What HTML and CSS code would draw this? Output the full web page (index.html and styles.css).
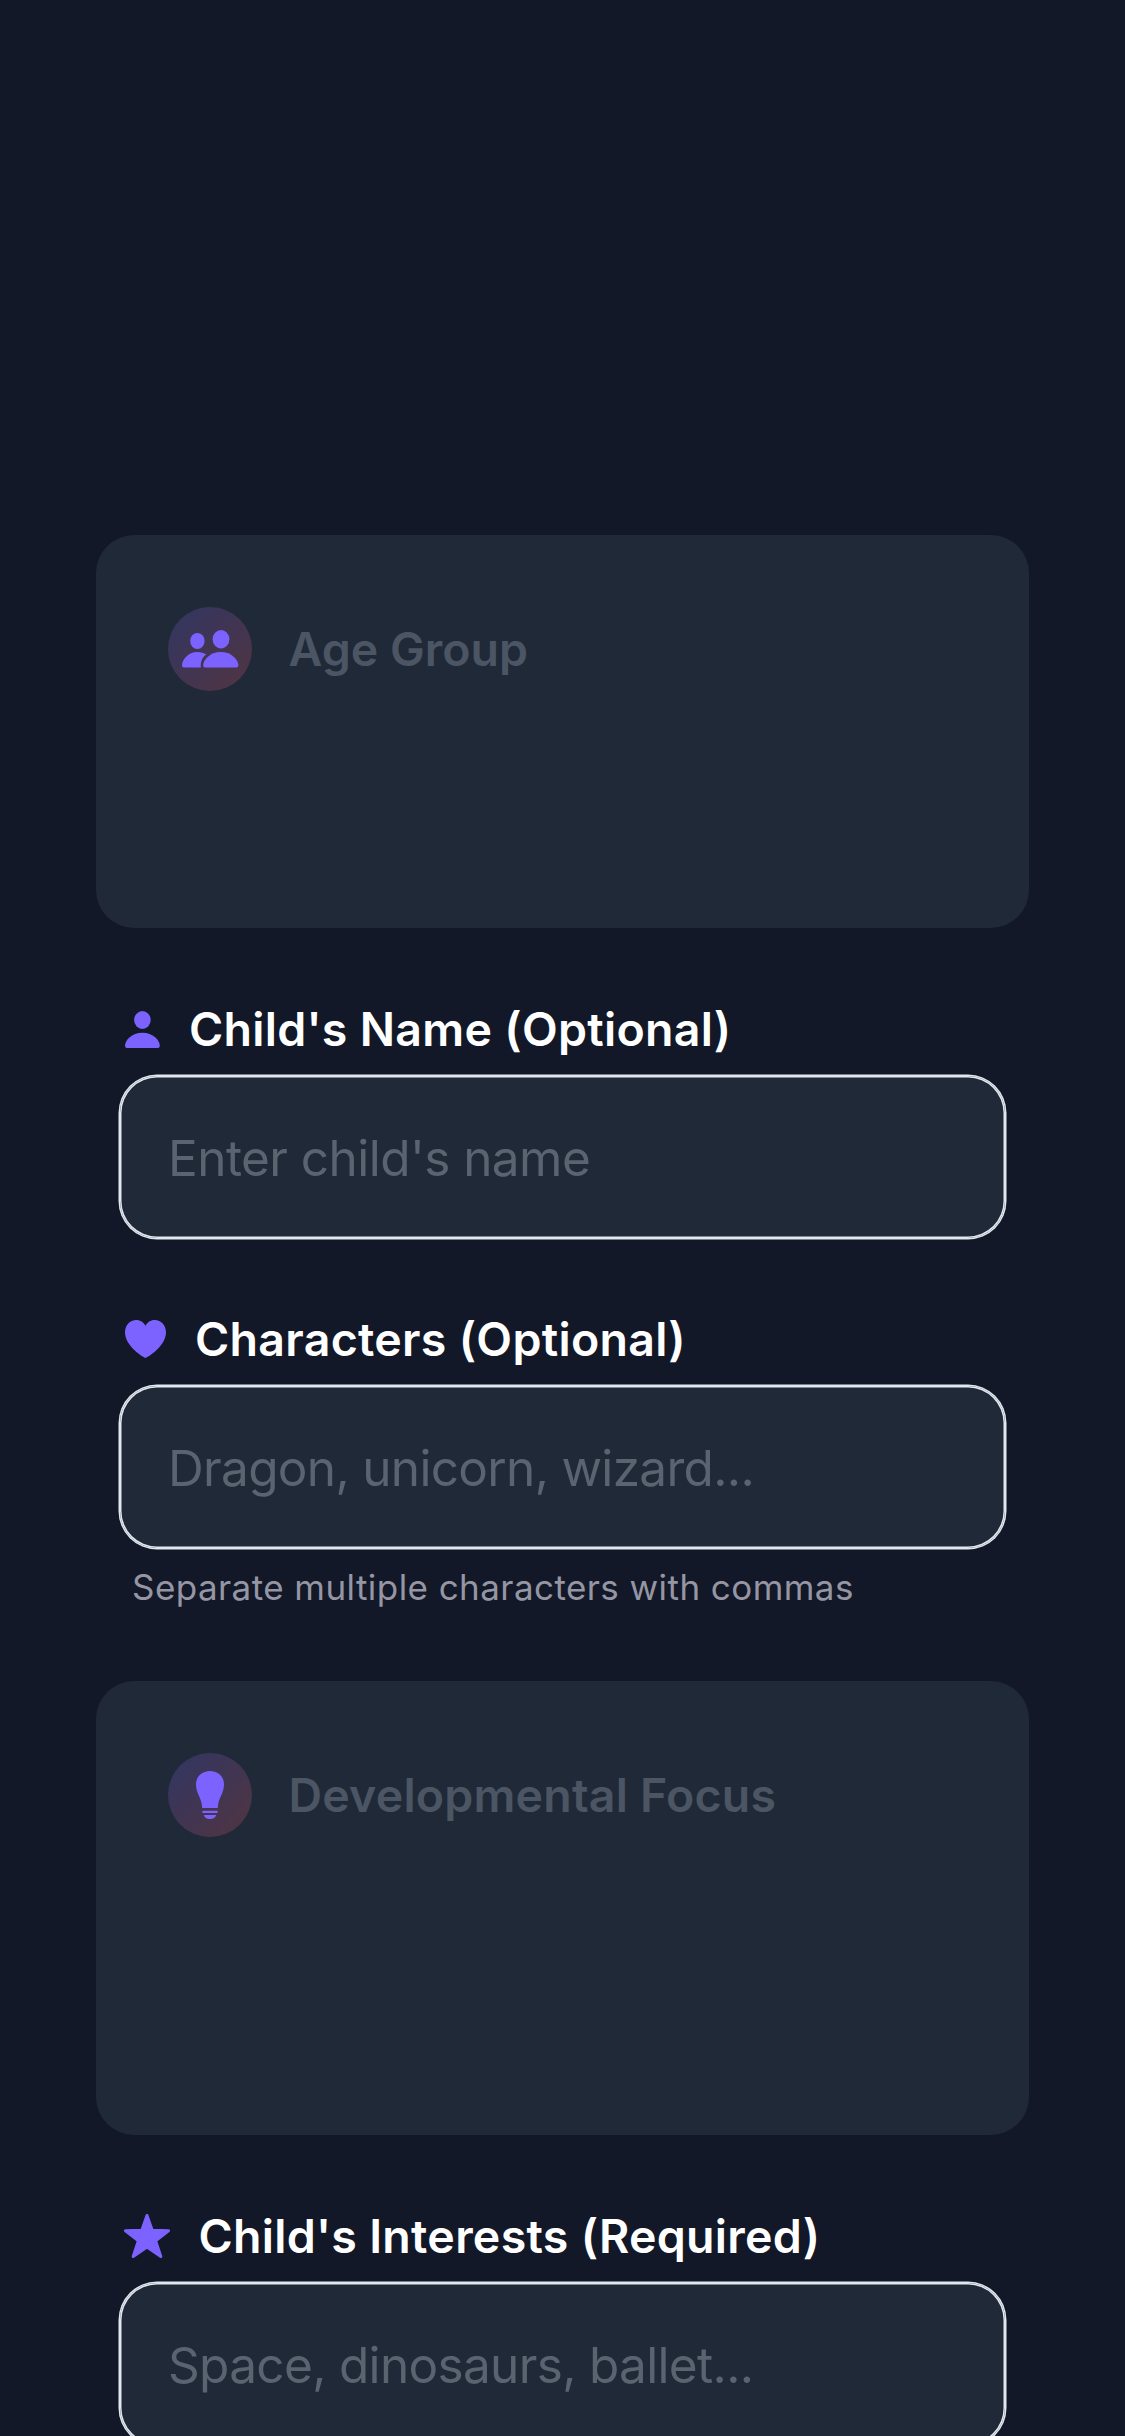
FILE: index.html
```html
<!DOCTYPE html>
<html lang="en">
<head>
<meta charset="utf-8">
<title>Story details</title>
<link rel="stylesheet" href="styles.css">
</head>
<body>
<main class="form">
  <section class="card card-age">
    <span class="badge">
      <svg class="icon-group" viewBox="0 0 57 38"><ellipse cx="15.4" cy="11" rx="7.2" ry="8"/><ellipse cx="39" cy="9.3" rx="8.4" ry="9.2"/><path d="M2.500 37.500C1 37.500 0 36.800 0 35.200C0 30 6 22 15.400 22C19 22 22 23 24.300 24.500C20.500 27.300 18.200 31.300 18.900 37.500Z"/><path d="M23.800 37.500C22.200 37.500 21.200 36.800 21.200 35.200C21.200 30 28 22 38.800 22C49.600 22 56.400 30 56.400 35.200C56.400 36.800 55.400 37.500 53.800 37.500Z"/></svg>
    </span>
    <h2 class="card-title">Age Group</h2>
  </section>

  <section class="field">
    <div class="label">
      <svg class="icon-person" viewBox="0 0 35 37"><ellipse cx="17.400" cy="9" rx="8.300" ry="9"/><path d="M2.600 37C1 37 0 36.300 0 34.700C0 29.500 6.700 21.800 17.400 21.800C28.100 21.800 34.800 29.500 34.800 34.700C34.800 36.300 33.800 37 32.200 37Z"/></svg>
      <span>Child's Name (Optional)</span>
    </div>
    <div class="input input-name">Enter child's name</div>
  </section>

  <section class="field">
    <div class="label">
      <svg class="icon-heart" viewBox="0 0 41 38"><path d="M20.500 38C19.500 38 0 26.500 0 12.500C0 5 5 0 11.200 0C15.500 0 18.800 2.300 20.500 5.900C22.200 2.300 25.500 0 29.800 0C36 0 41 5 41 12.500C41 26.500 21.500 38 20.500 38Z"/></svg>
      <span>Characters (Optional)</span>
    </div>
    <div class="input">Dragon, unicorn, wizard...</div>
    <p class="hint">Separate multiple characters with commas</p>
  </section>

  <section class="card card-focus">
    <span class="badge">
      <svg class="icon-bulb" viewBox="0 0 28 48"><path d="M6.200 37C6.100 27.500 0 22.500 0 13.500C0 5.500 6 0 14 0C22 0 28 5.500 28 13.500C28 22.500 21.900 27.500 21.800 37Z"/><rect x="6.200" y="39.700" width="15.600" height="2.300" rx="1"/><path d="M7.800 44H20.200C19.500 46.500 17.500 48 14 48C10.500 48 8.500 46.500 7.800 44Z"/></svg>
    </span>
    <h2 class="card-title card-title-focus">Developmental Focus</h2>
  </section>

  <section class="field">
    <div class="label label-star">
      <svg class="icon-star" viewBox="0 0 46 44"><path d="M23 1.500L28.200 16.300L44.500 16.700L31.600 26.700L36.800 42.500L23 33L9.200 42.500L14.400 26.700L1.500 16.700L17.800 16.300Z"/></svg>
      <span>Child's Interests (Required)</span>
    </div>
    <div class="input">Space, dinosaurs, ballet...</div>
  </section>
</main>
</body>
</html>
```
FILE: styles.css
```css
* {
  box-sizing: border-box;
  margin: 0;
}

body {
  height: 2436px;
  overflow: hidden;
  background: #121827;
  font-family: Inter, "Liberation Sans", sans-serif;
}

svg {
  display: block;
  flex: none;
  fill: #7c62ff;
}

.form {
  display: flex;
  flex-direction: column;
  gap: 71px;
  padding: 535px 96px 0;
}

.card {
  display: flex;
  flex: none;
  align-items: flex-start;
  gap: 36.5px;
  padding: 72px;
  border-radius: 38px;
  background: #202937;
}

.card-age {
  height: 393px;
}

.card-focus {
  height: 454px;
}

.badge {
  display: grid;
  flex: none;
  place-items: center;
  width: 84px;
  height: 84px;
  border-radius: 50%;
  background: linear-gradient(135deg, #313663, #513441);
}

.card-title {
  color: #4b5563;
  font-size: 46.5px;
  font-weight: 600;
  line-height: 84px;
  white-space: nowrap;
}

.card-title-focus {
  letter-spacing: 0.2px;
}

.field {
  display: flex;
  flex: none;
  flex-direction: column;
  gap: 17px;
  padding: 0 24px;
}

.label {
  display: flex;
  align-items: center;
  gap: 29px;
  height: 60px;
  padding-left: 5px;
  color: #fff;
  font-size: 46.5px;
  font-weight: 600;
  letter-spacing: 0.3px;
  white-space: nowrap;
}

.label-star {
  gap: 28.5px;
  padding-left: 4px;
}

.input {
  display: flex;
  align-items: center;
  height: 162px;
  padding: 2px 48px 0;
  border-radius: 37px;
  background: #202937;
  box-shadow: 0 0 0 1.5px #e2e8f0, inset 0 0 0 1.5px #e2e8f0;
  color: #5a6370;
  font-size: 49.5px;
  letter-spacing: -0.67px;
  white-space: nowrap;
}

.input-name {
  letter-spacing: -0.55px;
}

.hint {
  height: 45px;
  padding-left: 12px;
  color: #9595a3;
  font-size: 35px;
  letter-spacing: 0.43px;
  line-height: 44px;
}

.icon-group { width: 57px; height: 38px; }
.icon-person { width: 35px; height: 37px; }
.icon-heart { width: 41px; height: 38px; }
.icon-bulb { width: 28px; height: 48px; }

.icon-star {
  width: 46px;
  height: 44px;
  stroke: #7c62ff;
  stroke-width: 3px;
  stroke-linejoin: round;
}
```
